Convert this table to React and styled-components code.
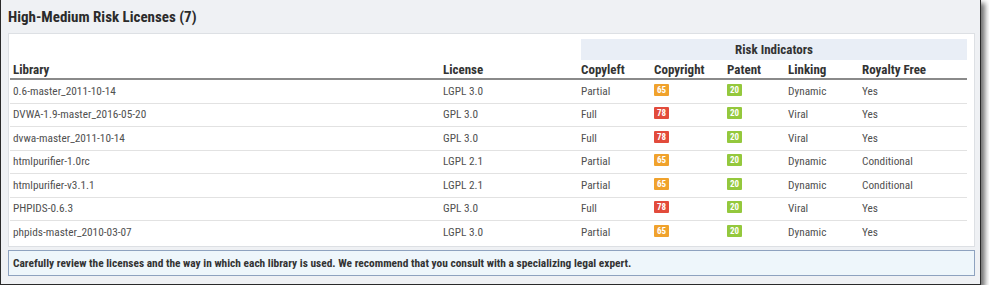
import React from 'react';
import styled, { createGlobalStyle } from 'styled-components';

const GlobalStyle = createGlobalStyle`
  html, body {
    margin: 0;
    padding: 0;
    background: #ffffff;
  }
  body {
    font-family: "Roboto Condensed", "Roboto", "Liberation Sans", sans-serif;
    font-stretch: condensed;
  }
`;

const Frame = styled.div`
  width: 979px;
  height: 284px;
  margin-top: -1px;
  border: 1px solid #2a2a2a;
  background: #eff1f4;
  box-shadow: 4px 4px 5px rgba(0, 0, 0, 0.55);
  display: flex;
  flex-direction: column;
`;

const Title = styled.h2`
  margin: 0;
  height: 33px;
  padding: 0 0 0 7px;
  display: flex;
  align-items: center;
  font-size: 15px;
  font-weight: 700;
  color: #2b2b2b;
`;

const Panel = styled.div`
  margin: 0 5px 0 7px;
  background: #ffffff;
  border: 1px solid #dde0e4;
  padding: 4px 6px 2px 1px;
`;

const Table = styled.table`
  width: 957px;
  border-collapse: collapse;
  table-layout: fixed;
  font-size: 11.3px;
`;

const BandCell = styled.th`
  padding: 0 0 0 3px;
  height: 22px;
`;

const Band = styled.div`
  height: 21px;
  background: #e9eef6;
  display: flex;
  align-items: center;
  justify-content: center;
  font-size: 13px;
  font-weight: 700;
  color: #333;
`;

const HeadCell = styled.th`
  text-align: left;
  font-size: 13px;
  font-weight: 700;
  color: #333;
  padding: 0 0 0 3px;
  height: 18px;
  border-bottom: 2px solid #8a8a8a;
  white-space: nowrap;
`;

const Row = styled.tr`
  border-bottom: 1px solid #e2e2e2;
  &:last-child {
    border-bottom: none;
  }
`;

const Cell = styled.td`
  padding: 0 0 0 3px;
  height: 22.5px;
  color: #505050;
  white-space: nowrap;
`;

const Badge = styled.span`
  display: inline-flex;
  align-items: center;
  justify-content: center;
  width: 15px;
  height: 12px;
  border-radius: 1px;
  font-size: 9px;
  font-weight: 700;
  color: #fff;
  background: ${({ $score }) =>
    $score >= 70 ? '#e24b3b' : $score >= 50 ? '#f0a22c' : '#94c83d'};
  vertical-align: middle;
  position: relative;
  top: -2px;
`;

const Notice = styled.div`
  margin: 3px 5px 0 7px;
  height: 24px;
  border: 1px solid #8ea2bf;
  background: #eef6fb;
  display: flex;
  align-items: center;
  padding-left: 4px;
  font-size: 11.4px;
  font-weight: 700;
  color: #333;
`;

const rows = [
  ['0.6-master_2011-10-14', 'LGPL 3.0', 'Partial', 65, 20, 'Dynamic', 'Yes'],
  ['DVWA-1.9-master_2016-05-20', 'GPL 3.0', 'Full', 78, 20, 'Viral', 'Yes'],
  ['dvwa-master_2011-10-14', 'GPL 3.0', 'Full', 78, 20, 'Viral', 'Yes'],
  ['htmlpurifier-1.0rc', 'LGPL 2.1', 'Partial', 65, 20, 'Dynamic', 'Conditional'],
  ['htmlpurifier-v3.1.1', 'LGPL 2.1', 'Partial', 65, 20, 'Dynamic', 'Conditional'],
  ['PHPIDS-0.6.3', 'GPL 3.0', 'Full', 78, 20, 'Viral', 'Yes'],
  ['phpids-master_2010-03-07', 'LGPL 3.0', 'Partial', 65, 20, 'Dynamic', 'Yes'],
];

const widths = [430, 138, 73, 73, 61, 74, 108];

const App = () => {
  return (
    <>
      <GlobalStyle />
      <Frame>
        <Title>High-Medium Risk Licenses (7)</Title>
        <Panel>
          <Table>
            <colgroup>
              {widths.map((w, i) => (
                <col key={i} style={{ width: w }} />
              ))}
            </colgroup>
            <thead>
              <tr>
                <th />
                <th />
                <BandCell colSpan={5}>
                  <Band>Risk Indicators</Band>
                </BandCell>
              </tr>
              <tr>
                <HeadCell>Library</HeadCell>
                <HeadCell>License</HeadCell>
                <HeadCell>Copyleft</HeadCell>
                <HeadCell>Copyright</HeadCell>
                <HeadCell>Patent</HeadCell>
                <HeadCell>Linking</HeadCell>
                <HeadCell>Royalty Free</HeadCell>
              </tr>
            </thead>
            <tbody>
              {rows.map((r, index) => (
                <Row key={index}>
                  <Cell>{r[0]}</Cell>
                  <Cell>{r[1]}</Cell>
                  <Cell>{r[2]}</Cell>
                  <Cell><Badge $score={r[3]}>{r[3]}</Badge></Cell>
                  <Cell><Badge $score={r[4]}>{r[4]}</Badge></Cell>
                  <Cell>{r[5]}</Cell>
                  <Cell>{r[6]}</Cell>
                </Row>
              ))}
            </tbody>
          </Table>
        </Panel>
        <Notice>
          Carefully review the licenses and the way in which each library is used. We recommend that you consult with a specializing legal expert.
        </Notice>
      </Frame>
    </>
  );
};

export default App;
